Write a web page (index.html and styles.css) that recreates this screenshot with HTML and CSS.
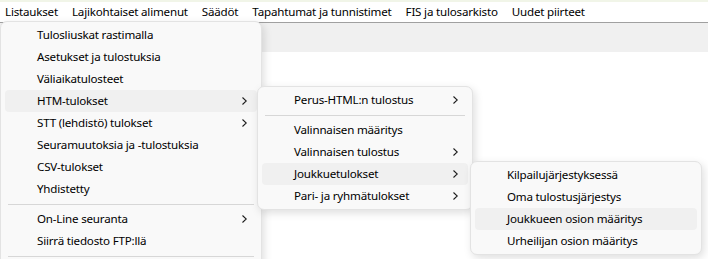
FILE: index.html
```html
<!DOCTYPE html>
<html lang="fi">
<head>
<meta charset="utf-8">
<title>Listaukset</title>
<link rel="stylesheet" href="styles.css">
</head>
<body>
<div class="top-band"></div>
<nav class="menubar">
  <span class="mb-item">Listaukset</span>
  <span class="mb-item">Lajikohtaiset alimenut</span>
  <span class="mb-item">Säädöt</span>
  <span class="mb-item">Tapahtumat ja tunnistimet</span>
  <span class="mb-item">FIS ja tulosarkisto</span>
  <span class="mb-item">Uudet piirteet</span>
</nav>
<div class="toolbar"></div>
<div class="workspace"></div>

<div class="menu m1">
  <div class="item">Tulosliuskat rastimalla</div>
  <div class="item">Asetukset ja tulostuksia</div>
  <div class="item">Väliaikatulosteet</div>
  <div class="item active">HTM-tulokset<svg class="chev" viewBox="0 0 5 8"><polyline points="0.5,0.5 4.3,4 0.5,7.5"/></svg></div>
  <div class="item">STT (lehdistö) tulokset<svg class="chev" viewBox="0 0 5 8"><polyline points="0.5,0.5 4.3,4 0.5,7.5"/></svg></div>
  <div class="item">Seuramuutoksia ja -tulostuksia</div>
  <div class="item">CSV-tulokset</div>
  <div class="item">Yhdistetty</div>
  <div class="sep"></div>
  <div class="item">On-Line seuranta<svg class="chev" viewBox="0 0 5 8"><polyline points="0.5,0.5 4.3,4 0.5,7.5"/></svg></div>
  <div class="item">Siirrä tiedosto FTP:llä</div>
  <div class="sep"></div>
  <div class="spacer"></div>
</div>

<div class="menu m2">
  <div class="item">Perus-HTML:n tulostus<svg class="chev" viewBox="0 0 5 8"><polyline points="0.5,0.5 4.3,4 0.5,7.5"/></svg></div>
  <div class="sep"></div>
  <div class="item">Valinnaisen määritys</div>
  <div class="item">Valinnaisen tulostus<svg class="chev" viewBox="0 0 5 8"><polyline points="0.5,0.5 4.3,4 0.5,7.5"/></svg></div>
  <div class="item active">Joukkuetulokset<svg class="chev" viewBox="0 0 5 8"><polyline points="0.5,0.5 4.3,4 0.5,7.5"/></svg></div>
  <div class="item">Pari- ja ryhmätulokset<svg class="chev" viewBox="0 0 5 8"><polyline points="0.5,0.5 4.3,4 0.5,7.5"/></svg></div>
</div>

<div class="menu m3">
  <div class="item">Kilpailujärjestyksessä</div>
  <div class="item">Oma tulostusjärjestys</div>
  <div class="item active">Joukkueen osion määritys</div>
  <div class="item">Urheilijan osion määritys</div>
</div>
</body>
</html>
```

FILE: styles.css
```css
html, body {
  margin: 0;
  padding: 0;
  background: #ffffff;
  overflow: hidden;
}
body {
  font-family: "Noto Sans", "Open Sans", sans-serif;
  font-size: 11.6px;
  letter-spacing: -0.2px;
  color: #000000;
  position: relative;
  width: 708px;
  height: 259px;
}
.top-band {
  height: 2px;
  background: #f1f5e8;
}
.menubar {
  display: flex;
  height: 20px;
  align-items: center;
  padding-left: 5px;
  gap: 14px;
  background: #ffffff;
  border-bottom: 1px solid #a0a0a0;
  white-space: nowrap;
}
.mb-item {
  line-height: 20px;
}
.toolbar {
  height: 29px;
  background: #f0f0f0;
}
.workspace {
  height: 200px;
  background: #ffffff;
}
.menu {
  position: absolute;
  background: #f9f9f9;
  border: 1px solid #e3e3e3;
  border-radius: 7px;
  box-shadow: 2px 3px 9px rgba(0, 0, 0, 0.13);
  padding: 2px 0;
  box-sizing: border-box;
  white-space: nowrap;
}
.m1 {
  left: 0;
  top: 21px;
  width: 262px;
}
.m2 {
  left: 257px;
  top: 86px;
  width: 216px;
}
.m3 {
  left: 470px;
  top: 161px;
  width: 232px;
}
.item {
  height: 22px;
  margin: 0 4px;
  padding: 0 10px 0 32px;
  display: flex;
  align-items: center;
  justify-content: space-between;
  border-radius: 4px;
  line-height: 22px;
}
.item.active {
  background: #f0f0f0;
}
.chev {
  width: 5px;
  height: 8px;
  fill: none;
  stroke: #1a1a1a;
  stroke-width: 1.1;
}
.sep {
  height: 1px;
  margin: 4px 7px 3px 7px;
  background: #d7d7d7;
}
.spacer {
  height: 20px;
}
```
